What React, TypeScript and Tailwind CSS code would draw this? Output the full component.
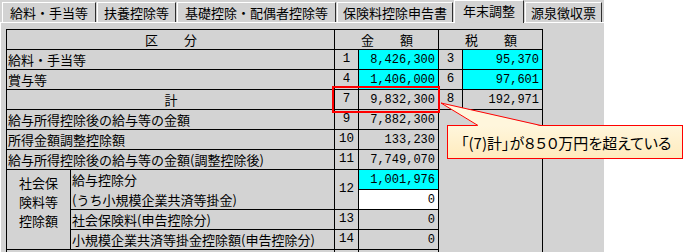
import type { ReactNode } from "react";

const FONT = { fontFamily: '"Noto Sans CJK JP", "DejaVu Sans", sans-serif' };

const tabs = [
  { label: "給料・手当等", w: "w-[94px]" },
  { label: "扶養控除等", w: "w-[79px]" },
  { label: "基礎控除・配偶者控除等", w: "w-[159px]" },
  { label: "保険料控除申告書", w: "w-[116px]" },
  { label: "年末調整", w: "w-[70px]", active: true },
  { label: "源泉徴収票", w: "w-[77px]" },
];

function Num({ children, className = "" }: { children?: ReactNode; className?: string }) {
  return (
    <div
      className={`flex items-center justify-end pr-[3px] font-['Liberation_Mono',monospace] text-[12px] leading-none ${className}`}
    >
      {children}
    </div>
  );
}

function No({ children, className = "" }: { children?: ReactNode; className?: string }) {
  return (
    <div className={`flex items-center justify-center bg-[#d3d3d3] font-['Liberation_Mono',monospace] text-[12.5px] leading-none ${className}`}>
      {children}
    </div>
  );
}

function Label({ children, className = "" }: { children?: ReactNode; className?: string }) {
  return (
    <div className={`flex items-center bg-[#d3d3d3] pl-[1px] text-[13px] leading-none whitespace-nowrap ${className}`}>
      {children}
    </div>
  );
}

export default function App() {
  return (
    <div className="relative h-[252px] w-[683px] overflow-hidden bg-white text-black" style={FONT}>
      <div className="h-full w-[604px] bg-[#d3d3d3]">
        {/* Tabs */}
        <div className="flex h-[22px] items-end gap-px pl-[2px]">
          {tabs.map((t) => (
            <div
              key={t.label}
              className={`${t.w} relative flex items-center justify-center border-l border-t border-r border-l-white border-t-white border-r-[#303030] bg-[#d3d3d3] text-[13px] leading-none whitespace-nowrap ${
                t.active ? "z-10 h-[23px] -mb-px pb-[3px]" : "h-[20px]"
              }`}
            >
              {t.label}
            </div>
          ))}
        </div>

        {/* Panel */}
        <div className="border-t border-l border-white pl-[5px] pt-[6px]">
          <div className="grid w-[537px] grid-cols-[63px_263px_23px_79px_23px_79px] grid-rows-[repeat(12,19px)] gap-px border border-black bg-black">
            {/* header */}
            <Label className="col-span-2 col-start-1 row-start-1 justify-center">区　　分</Label>
            <Label className="col-span-2 col-start-3 row-start-1 justify-center">金　　額</Label>
            <Label className="col-span-2 col-start-5 row-start-1 justify-center">税　　額</Label>

            <Label className="col-span-2 col-start-1 row-start-2">給料・手当等</Label>
            <No className="col-start-3 row-start-2">1</No>
            <Num className="col-start-4 row-start-2 bg-[#00ffff]">8,426,300</Num>
            <No className="col-start-5 row-start-2">3</No>
            <Num className="col-start-6 row-start-2 bg-[#00ffff]">95,370</Num>

            <Label className="col-span-2 col-start-1 row-start-3">賞与等</Label>
            <No className="col-start-3 row-start-3">4</No>
            <Num className="col-start-4 row-start-3 bg-[#00ffff]">1,406,000</Num>
            <No className="col-start-5 row-start-3">6</No>
            <Num className="col-start-6 row-start-3 bg-[#00ffff]">97,601</Num>

            <Label className="col-span-2 col-start-1 row-start-4 justify-center">計</Label>
            <No className="col-start-3 row-start-4">7</No>
            <Num className="col-start-4 row-start-4 bg-[#d3d3d3]">9,832,300</Num>
            <No className="col-start-5 row-start-4">8</No>
            <Num className="col-start-6 row-start-4 bg-[#d3d3d3]">192,971</Num>

            <Label className="col-span-2 col-start-1 row-start-5">給与所得控除後の給与等の金額</Label>
            <No className="col-start-3 row-start-5">9</No>
            <Num className="col-start-4 row-start-5 bg-[#d3d3d3]">7,882,300</Num>
            <div className="col-span-2 col-start-5 row-span-8 row-start-5 bg-[#d3d3d3]" />

            <Label className="col-span-2 col-start-1 row-start-6">所得金額調整控除額</Label>
            <No className="col-start-3 row-start-6">10</No>
            <Num className="col-start-4 row-start-6 bg-[#d3d3d3]">133,230</Num>

            <Label className="col-span-2 col-start-1 row-start-7">給与所得控除後の給与等の金額(調整控除後)</Label>
            <No className="col-start-3 row-start-7">11</No>
            <Num className="col-start-4 row-start-7 bg-[#d3d3d3]">7,749,070</Num>

            {/* 社会保険料等控除額 group */}
            <div className="col-start-1 row-span-4 row-start-8 flex flex-col items-center bg-[#d3d3d3] pt-[3px] text-[13px] leading-[19px]">
              <span>社会保</span>
              <span>険料等</span>
              <span>控除額</span>
            </div>
            <div className="col-start-2 row-span-2 row-start-8 flex flex-col justify-center bg-[#d3d3d3] pl-[1px] text-[13px] leading-[20px]">
              <span>給与控除分</span>
              <span>(うち小規模企業共済等掛金)</span>
            </div>
            <No className="col-start-3 row-span-2 row-start-8">12</No>
            <Num className="col-start-4 row-start-8 bg-[#00ffff]">1,001,976</Num>
            <Num className="col-start-4 row-start-9 bg-white">0</Num>

            <Label className="col-start-2 row-start-10">社会保険料(申告控除分)</Label>
            <No className="col-start-3 row-start-10">13</No>
            <Num className="col-start-4 row-start-10 bg-[#d3d3d3]">0</Num>

            <Label className="col-start-2 row-start-11">小規模企業共済等掛金控除額(申告控除分)</Label>
            <No className="col-start-3 row-start-11">14</No>
            <Num className="col-start-4 row-start-11 bg-[#d3d3d3]">0</Num>

            <Label className="col-span-2 col-start-1 row-start-12" />
            <No className="col-start-3 row-start-12" />
            <Num className="col-start-4 row-start-12 bg-[#d3d3d3]" />
          </div>
        </div>
      </div>

      {/* highlight around (7) */}
      <div className="absolute left-[332px] top-[86px] h-[27px] w-[108px] border-2 border-[#ff0000]" />

      {/* callout */}
      <div className="absolute left-[447px] top-[125px] flex h-[34px] w-[236px] items-center border border-[#ff0000] bg-gradient-to-b from-[#fff6dc] to-[#ffebbd] pl-[13px] text-[15px] leading-none whitespace-nowrap [font-feature-settings:'palt']">
        「(7)計」が８５０万円を超えている
      </div>
      <svg className="absolute left-0 top-0" width="683" height="252" viewBox="0 0 683 252">
        <polygon points="478,126 441,103 541,126" fill="#fff6dc" />
        <polyline points="478,125.5 441,103 541,125.5" fill="none" stroke="#ff0000" strokeWidth="1" />
      </svg>
    </div>
  );
}
